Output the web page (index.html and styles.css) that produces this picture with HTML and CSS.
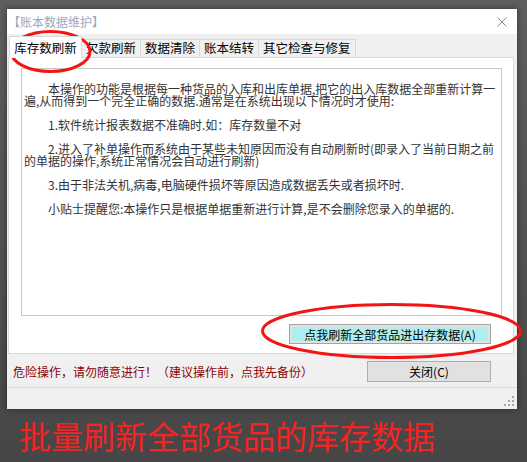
FILE: index.html
```html
<!DOCTYPE html>
<html lang="zh-CN">

<head>
  <meta charset="UTF-8" />
  <meta name="viewport" content="width=device-width, initial-scale=1.0" />
  <title>账本数据维护</title>
  <link rel="stylesheet" href="styles.css">
</head>

<body>

  <div class="window">
    <div class="titlebar">
      <span class="title">【账本数据维护】</span>
      <svg class="close-x" width="10" height="10" viewBox="0 0 10 10">
        <path d="M0.5 0.5 L9.5 9.5 M9.5 0.5 L0.5 9.5" stroke="#8c8c8c" stroke-width="1" fill="none" />
      </svg>
    </div>

    <div class="tabs">
      <div class="tab active">库存数刷新</div>
      <div class="tab">欠款刷新</div>
      <div class="tab">数据清除</div>
      <div class="tab">账本结转</div>
      <div class="tab">其它检查与修复</div>
    </div>

    <div class="panel">
      <div class="notes">
        <p>本操作的功能是根据每一种货品的入库和出库单据,把它的出入库数据全部重新计算一<br>遍,从而得到一个完全正确的数据.通常是在系统出现以下情况时才使用:</p>
        <p>1.软件统计报表数据不准确时.如：库存数量不对</p>
        <p>2.进入了补单操作而系统由于某些未知原因而没有自动刷新时(即录入了当前日期之前<br>的单据的操作,系统正常情况会自动进行刷新)</p>
        <p>3.由于非法关机,病毒,电脑硬件损坏等原因造成数据丢失或者损坏时.</p>
        <p>小贴士提醒您:本操作只是根据单据重新进行计算,是不会删除您录入的单据的.</p>
      </div>
      <div class="panel-actions">
        <button class="btn btn-refresh">点我刷新全部货品进出存数据(A)</button>
      </div>
    </div>

    <div class="footer">
      <span class="warn">危险操作，请勿随意进行！（建议操作前，点我先备份）</span>
      <button class="btn btn-close">关闭(C)</button>
    </div>

    <div class="statusbar">
      <svg width="10" height="10" viewBox="0 0 10 10">
        <rect x="8" y="0" width="2" height="2" fill="#a6a6a6" />
        <rect x="4" y="4" width="2" height="2" fill="#a6a6a6" />
        <rect x="8" y="4" width="2" height="2" fill="#a6a6a6" />
        <rect x="0" y="8" width="2" height="2" fill="#a6a6a6" />
        <rect x="4" y="8" width="2" height="2" fill="#a6a6a6" />
        <rect x="8" y="8" width="2" height="2" fill="#a6a6a6" />
      </svg>
    </div>
  </div>

  <div class="caption">批量刷新全部货品的库存数据</div>

  <!-- red circles drawn over the screenshot -->
  <svg class="marks" width="527" height="462" viewBox="0 0 527 462">
    <ellipse cx="50.5" cy="51.5" rx="39.5" ry="20" fill="none" stroke="#f31515" stroke-width="3" />
    <ellipse cx="391.5" cy="331" rx="129" ry="26.5" fill="none" stroke="#f31515" stroke-width="3" />
  </svg>

</body>

</html>
```

FILE: styles.css
```css
* {
  box-sizing: border-box;
}

body {
  margin: 0;
  width: 527px;
  height: 462px;
  overflow: hidden;
  position: relative;
  background: linear-gradient(#5e5e5e, #464646);
  font-family: "Noto Sans CJK SC", sans-serif;
  font-size: 12px;
}

.window {
  margin: 9px 0 0 7px;
  width: 510px;
  height: 400px;
  background-color: #f0f0f0;
  display: flex;
  flex-direction: column;
  box-shadow: 0 0 6px rgba(0, 0, 0, 0.45);
}

.titlebar {
  height: 25px;
  flex: none;
  background-color: #fff;
  display: flex;
  align-items: center;
  justify-content: space-between;
  padding: 0 10px 0 1px;
}

.title {
  color: #9ea7bd;
  font-size: 12px;
  line-height: 12px;
}

.tabs {
  height: 23px;
  flex: none;
  display: flex;
  align-items: flex-end;
  padding-left: 2px;
}

.tab {
  height: 18px;
  padding: 0 4px;
  border: 1px solid #d9d9d9;
  border-bottom: none;
  background-color: #f0f0f0;
  font-size: 12.5px;
  line-height: 16px;
  color: #000;
}

.tab + .tab {
  margin-left: -1px;
}

.tab.active {
  height: 22px;
  padding: 2px 4.25px 0;
  background-color: #fff;
  margin-bottom: -1px;
  line-height: 17px;
  position: relative;
  z-index: 1;
}

.panel {
  height: 297px;
  flex: none;
  margin: 0 3px 0 1px;
  background-color: #fff;
  border: 1px solid #d9d9d9;
  padding: 10px 0 0 12px;
}

.notes {
  width: 481px;
  height: 248px;
  border: 1px solid #c9c9c9;
  padding: 14px 2px 0 2px;
  color: #333;
  font-size: 12px;
  line-height: 12px;
}

.notes p {
  margin: 0 0 12px;
  text-indent: 24px;
  white-space: nowrap;
}

.panel-actions {
  display: flex;
  justify-content: flex-end;
  margin: 8px 22px 0 0;
}

.btn {
  font-family: inherit;
  font-size: 12px;
  color: #000;
  border: 1px solid #adadad;
  padding: 0;
  cursor: pointer;
}

.btn-refresh {
  width: 202px;
  height: 20px;
  background-color: #afeeee;
  border-color: #a3a3a3;
  box-shadow: inset 0 0 0 2px #e2e2e2;
}

.footer {
  height: 34px;
  flex: none;
  display: flex;
  align-items: center;
  justify-content: space-between;
  padding: 1px 26px 0 6px;
  border-bottom: 1px solid #d7d7d7;
}

.warn {
  color: #8e0000;
  font-size: 12px;
}

.btn-close {
  width: 124px;
  height: 21px;
  background-color: #e1e1e1;
}

.statusbar {
  flex: 1;
  display: flex;
  justify-content: flex-end;
  align-items: flex-end;
  padding: 0 3px 3px 0;
}

.caption {
  margin: 10px 0 0 19px;
  font-size: 32px;
  line-height: 32px;
  color: #f52323;
}

.marks {
  position: absolute;
  left: 0;
  top: 0;
  pointer-events: none;
}
```
